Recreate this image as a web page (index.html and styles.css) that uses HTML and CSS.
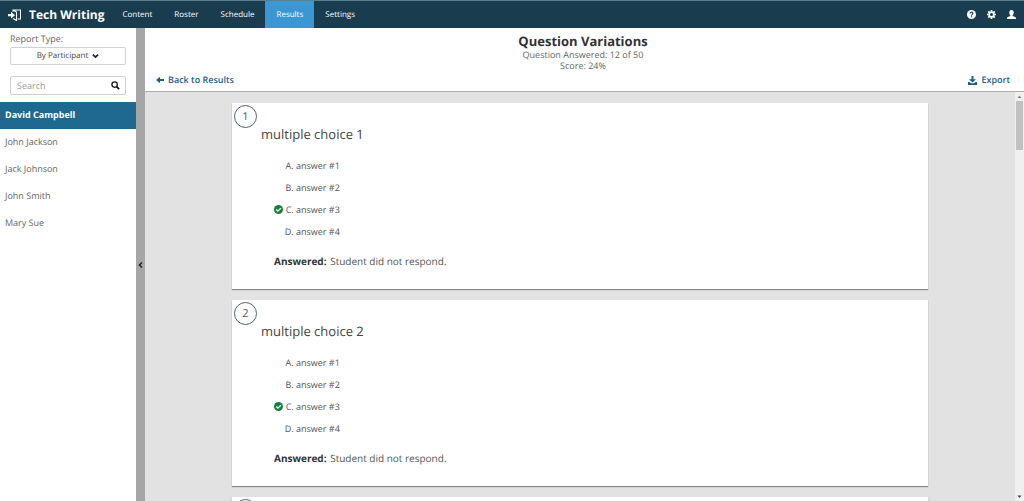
FILE: index.html
```html
<!DOCTYPE html>
<html lang="en">
<head>
  <meta charset="UTF-8">
  <meta name="viewport" content="width=device-width, initial-scale=1.0">
  <title>Tech Writing - Results</title>
  <link rel="stylesheet" href="styles.css">
</head>
<body>
  <header class="topbar">
    <a class="brand" href="#">
      <svg class="brand-icon" viewBox="0 0 13 12" aria-hidden="true">
        <path d="M0 5h3V2.800l4 3.400-4 3.400V7.200H0z" fill="#fff"/>
        <path d="M5 2.800V1h7.500v9H9.500M5 9.500l3.500 2V3L5 1" fill="none" stroke="#fff" stroke-width="1.100"/>
      </svg>
      Tech Writing
    </a>
    <nav class="nav">
      <a href="#">Content</a>
      <a href="#">Roster</a>
      <a href="#">Schedule</a>
      <a href="#" class="active">Results</a>
      <a href="#">Settings</a>
    </nav>
    <div class="tools">
      <a href="#" aria-label="Help">
        <svg viewBox="0 0 16 16"><circle cx="8" cy="8" r="8" fill="#fff"/><path d="M5.500 6.200a2.500 2.300 0 1 1 3.700 2Q8 8.800 8 10" fill="none" stroke="#1a3c4f" stroke-width="2"/><path d="M7 11h2v2H7z" fill="#1a3c4f"/></svg>
      </a>
      <a href="#" aria-label="Preferences">
        <svg viewBox="0 0 16 16"><circle cx="8" cy="8" r="4.300" fill="none" stroke="#fff" stroke-width="3"/><path d="M8 0v3M8 13v3M0 8h3M13 8h3M2.300 2.300l2.200 2.200M11.500 11.500l2.200 2.200M13.700 2.300l-2.200 2.200M4.500 11.500l-2.200 2.200" stroke="#fff" stroke-width="3"/></svg>
      </a>
      <a href="#" aria-label="Account">
        <svg viewBox="0 0 16 16"><path d="M8 0c2.500 0 4 1.700 4 4.300 0 2-.8 3.600-2 4.700v1.500l4.500 2c1 .5 1.500 1.200 1.500 3.500H0c0-2.300.5-3 1.500-3.500l4.500-2V9C4.800 7.900 4 6.300 4 4.300 4 1.700 5.500 0 8 0z" fill="#fff"/></svg>
      </a>
    </div>
  </header>

  <div class="layout">
    <aside class="sidebar">
      <div class="filters">
        <span class="filters-label" id="reportLabel">Report Type:</span>
        <button type="button" class="report-type" aria-labelledby="reportLabel reportValue">
          <span id="reportValue">By Participant</span>
          <svg viewBox="0 0 8 6" aria-hidden="true"><path d="M1 1.300l3 3 3-3" fill="none" stroke="#222" stroke-width="2"/></svg>
        </button>
        <div class="search">
          <input type="text" placeholder="Search" aria-label="Search">
          <svg viewBox="0 0 10 10" aria-hidden="true"><circle cx="4" cy="4" r="3" fill="none" stroke="#111" stroke-width="1.400"/><path d="M6.200 6.200L9 9" stroke="#111" stroke-width="2"/></svg>
        </div>
      </div>
      <ul class="people">
        <li><a href="#" class="active">David Campbell</a></li>
        <li><a href="#">John Jackson</a></li>
        <li><a href="#">Jack Johnson</a></li>
        <li><a href="#">John Smith</a></li>
        <li><a href="#">Mary Sue</a></li>
      </ul>
    </aside>

    <button type="button" class="splitter" aria-label="Collapse sidebar">
      <svg viewBox="0 0 5 6" aria-hidden="true"><path d="M4 .5L1.500 3 4 5.500" fill="none" stroke="#222" stroke-width="1.500"/></svg>
    </button>

    <main class="main">
      <div class="report-head">
        <h1>Question Variations</h1>
        <p>Question Answered: 12 of 50</p>
        <p>Score: 24%</p>
        <div class="report-actions">
          <a href="#">
            <svg viewBox="0 0 8 8" aria-hidden="true"><path d="M0 4l4-3.200V3h4v2H4v2.200z" fill="#1d5f8a"/></svg>
            Back to Results
          </a>
          <a href="#">
            <svg class="export-icon" viewBox="0 0 9 9" aria-hidden="true"><path d="M3.500 0h2v3.200H8L4.500 6.500 1 3.200h2.500zM0 6h1.500l1.500 1.200h3L7.500 6H9v3H0z" fill="#1d5f8a"/></svg>
            Export
          </a>
        </div>
      </div>

      <div class="scroll">
        <div class="questions">
          <section class="card">
            <span class="number">1</span>
            <h2>multiple choice 1</h2>
            <ol class="answers">
              <li>answer #1</li>
              <li>answer #2</li>
              <li class="correct">answer #3
                <svg viewBox="0 0 10 10" aria-label="Correct"><circle cx="5" cy="5" r="5" fill="#15803f"/><path d="M2.500 5l1.800 1.800L7.600 3.500" fill="none" stroke="#fff" stroke-width="1.500"/></svg>
              </li>
              <li>answer #4</li>
            </ol>
            <p class="answered"><strong>Answered:</strong> Student did not respond.</p>
          </section>
          <section class="card">
            <span class="number">2</span>
            <h2>multiple choice 2</h2>
            <ol class="answers">
              <li>answer #1</li>
              <li>answer #2</li>
              <li class="correct">answer #3
                <svg viewBox="0 0 10 10" aria-label="Correct"><circle cx="5" cy="5" r="5" fill="#15803f"/><path d="M2.500 5l1.800 1.800L7.600 3.500" fill="none" stroke="#fff" stroke-width="1.500"/></svg>
              </li>
              <li>answer #4</li>
            </ol>
            <p class="answered"><strong>Answered:</strong> Student did not respond.</p>
          </section>
          <section class="card">
            <span class="number"></span>
          </section>
        </div>
        <div class="scrollbar" aria-hidden="true">
          <svg viewBox="0 0 9 9"><path d="M2.500 6l2-2.500 2 2.500z" fill="#888"/></svg>
          <div class="thumb"></div>
          <svg viewBox="0 0 9 9"><path d="M2.500 3.500l2 2.500 2-2.500z" fill="#444"/></svg>
        </div>
      </div>
    </main>
  </div>
</body>
</html>
```

FILE: styles.css
```css
* {
  box-sizing: border-box;
}

body {
  display: flex;
  flex-direction: column;
  height: 100vh;
  margin: 0;
  overflow: hidden;
  font-family: "Open Sans", "Noto Sans", sans-serif;
  font-size: 9px;
  line-height: 12px;
  text-rendering: geometricPrecision;
  color: #555;
  background-color: #fff;
}

h1, h2, p, ul, ol {
  margin: 0;
  padding: 0;
}

a {
  text-decoration: none;
}

svg {
  display: block;
  flex: none;
}

button {
  font: inherit;
  text-rendering: inherit;
  cursor: pointer;
}

/* top bar */
.topbar {
  display: flex;
  flex: none;
  height: 28px;
  background-color: #1a3c4f;
  border-top: 1px solid #5b7f8e;
}

.topbar a {
  display: flex;
  align-items: center;
  color: #fff;
}

.brand {
  gap: 8px;
  padding: 0 7px 0 8px;
  font-size: 12px;
  font-weight: 700;
}

.brand-icon {
  width: 13px;
  height: 12px;
}

.nav {
  display: flex;
  font-size: 8px;
}

.nav a {
  padding: 0 11px;
}

.nav a.active {
  background-color: #3a97d3;
}

.tools {
  display: flex;
  gap: 11px;
  margin-left: auto;
  padding-right: 8px;
}

.tools svg {
  width: 9px;
  height: 9px;
}

/* sidebar */
.layout {
  display: flex;
  flex: 1;
  min-height: 0;
}

.sidebar {
  flex: none;
  width: 136px;
}

.filters {
  padding: 5px 10px 7px;
}

.filters-label {
  display: block;
  margin-bottom: 2px;
  color: #666;
}

.report-type {
  display: flex;
  align-items: center;
  justify-content: center;
  gap: 4px;
  width: 100%;
  height: 18px;
  margin-bottom: 11px;
  padding: 0;
  font-size: 8px;
  color: #444;
  background-color: #fff;
  border: 1px solid #d0d0d0;
  border-radius: 2px;
}

.report-type svg {
  width: 7px;
  height: 6px;
}

.search {
  display: flex;
  align-items: center;
  height: 19px;
  padding: 0 5px 0 6px;
  border: 1px solid #d0d0d0;
  border-radius: 2px;
}

.search input {
  flex: 1;
  min-width: 0;
  padding: 0;
  font: inherit;
  text-rendering: inherit;
  color: #444;
  background: none;
  border: 0;
  outline: 0;
}

.search input::placeholder {
  color: #999;
}

.search svg {
  width: 9px;
  height: 9px;
}

.people {
  list-style: none;
}

.people a {
  display: flex;
  align-items: center;
  height: 27px;
  padding: 0 5px 1px;
  color: #666;
}

.people a.active {
  font-weight: 700;
  color: #fff;
  background-color: #1d6990;
}

.splitter {
  display: flex;
  flex: none;
  align-items: center;
  justify-content: center;
  width: 9px;
  padding: 0;
  background-color: #a6a6a6;
  border: 0;
}

.splitter svg {
  width: 5px;
  height: 6px;
}

/* report header */
.main {
  display: flex;
  flex: 1;
  flex-direction: column;
  min-width: 0;
}

.report-head {
  flex: none;
  padding: 5px 14px 5px 11px;
  line-height: 11px;
  text-align: center;
  color: #666;
  border-bottom: 1px solid #a9adaf;
}

.report-head h1 {
  font-size: 13px;
  line-height: 16px;
  color: #333;
}

.report-actions {
  display: flex;
  justify-content: space-between;
  margin-top: 3px;
  line-height: 12px;
}

.report-actions a {
  display: flex;
  align-items: center;
  gap: 4px;
  font-weight: 600;
  color: #1d5f8a;
}

.report-actions svg {
  width: 8px;
  height: 8px;
}

.report-actions .export-icon {
  width: 9px;
  height: 9px;
}

/* questions */
.scroll {
  display: flex;
  flex: 1;
  min-height: 0;
  background-color: #e2e2e2;
}

.questions {
  flex: 1;
  padding-top: 11px;
  overflow-y: auto;
  scrollbar-width: none;
}

.card {
  width: 80%;
  min-height: 186px;
  margin: 0 auto 11px;
  padding: 2px;
  background-color: #fff;
  box-shadow: 0 1px 1px #888;
}

.number {
  display: flex;
  align-items: center;
  justify-content: center;
  width: 23px;
  height: 23px;
  font-size: 11px;
  border: 1px solid #4f6572;
  border-radius: 50%;
}

.card h2 {
  margin: -2px 0 13px 27px;
  font-size: 13px;
  font-weight: 400;
  line-height: 16px;
  color: #444;
}

.answers {
  margin-left: 62px;
  list-style: upper-alpha;
}

.answers li {
  position: relative;
  line-height: 22px;
}

.answers svg {
  position: absolute;
  top: 6px;
  left: -22px;
  width: 9px;
  height: 9px;
}

.answered {
  margin: 12px 0 0 40px;
  font-size: 10px;
}

.answered strong {
  margin-right: 1px;
  color: #333;
}

.scrollbar {
  display: flex;
  flex: none;
  flex-direction: column;
  width: 9px;
  background-color: #f0f0f0;
}

.scrollbar .thumb {
  height: 49px;
  margin: 0 1px auto;
  background-color: #c1c1c1;
}
```
